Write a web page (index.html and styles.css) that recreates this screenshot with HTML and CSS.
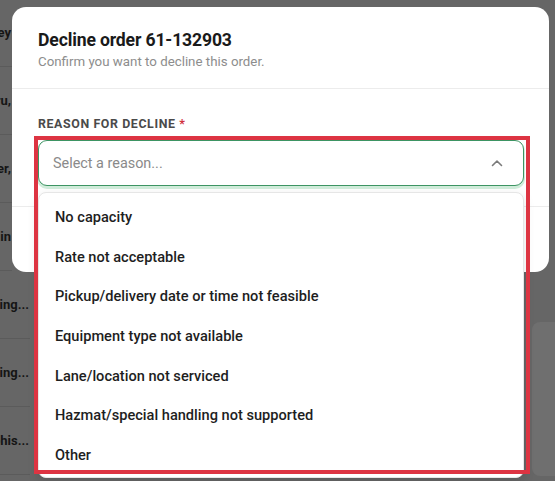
FILE: index.html
```html
<!DOCTYPE html>
<html lang="en">
<head>
<meta charset="utf-8">
<title>Decline order</title>
<link rel="stylesheet" href="styles.css">
</head>
<body>
<div class="page">
  <div class="table">
    <div class="row row-short"><span class="cell">Whitney</span></div>
    <div class="row row-short"><span class="cell">Peru,</span></div>
    <div class="row row-short"><span class="cell">Parker,</span></div>
    <div class="row row-short"><span class="cell">Main</span></div>
    <div class="row"><span class="cell">Shipping...</span></div>
    <div class="row"><span class="cell">Shipping...</span></div>
    <div class="row"><span class="cell">Memphis...</span></div>
  </div>
  <div class="side-card"></div>

  <div class="modal">
    <div class="modal-head">
      <h1 class="title">Decline order 61-132903</h1>
      <p class="subtitle">Confirm you want to decline this order.</p>
    </div>
    <div class="modal-body">
      <div class="label">REASON FOR DECLINE <span class="req">*</span></div>
      <div class="select-wrap">
        <div class="select">
          <span class="placeholder">Select a reason...</span>
          <svg class="chev" width="12" height="8" viewBox="0 0 12 8"><path d="M1.5 6.5 L6 2 L10.5 6.5" fill="none" stroke="#7a7a7a" stroke-width="1.6" stroke-linecap="round" stroke-linejoin="round"/></svg>
        </div>
        <ul class="menu">
          <li class="opt">No capacity</li>
          <li class="opt">Rate not acceptable</li>
          <li class="opt">Pickup/delivery date or time not feasible</li>
          <li class="opt">Equipment type not available</li>
          <li class="opt">Lane/location not serviced</li>
          <li class="opt">Hazmat/special handling not supported</li>
          <li class="opt">Other</li>
        </ul>
      </div>
    </div>
    <div class="modal-foot"></div>
  </div>

  <div class="highlight"></div>
</div>
</body>
</html>
```

FILE: styles.css
```css
* { box-sizing: border-box; }
html, body { margin: 0; padding: 0; }
body {
  font-family: Roboto, "Liberation Sans", Arial, sans-serif;
  background: #676767;
}
.page {
  position: relative;
  width: 555px;
  height: 481px;
  overflow: hidden;
  background: #666666;
}
.table {
  display: flex;
  flex-direction: column;
  margin-top: -1px;
}
.row {
  height: 68px;
  border-bottom: 1px solid #5b5b5b;
  display: flex;
  align-items: center;
  width: 30px;
  overflow: hidden;
  justify-content: flex-end;
}
.row-short { width: 12px; }
.cell {
  font-size: 13px;
  font-weight: 700;
  color: #151515;
  white-space: nowrap;
  padding-right: 1px;
}
.side-card {
  position: absolute;
  left: 532px;
  top: 322px;
  width: 40px;
  height: 154px;
  border-radius: 8px;
  background: #6f6f6f;
}
.modal {
  position: absolute;
  left: 12px;
  top: 7px;
  width: 537px;
  height: 265px;
  background: #ffffff;
  border-radius: 14px;
  display: flex;
  flex-direction: column;
}
.modal-head {
  padding: 23px 26px 0 26px;
  height: 82px;
  border-bottom: 1.5px solid #ececec;
}
.title {
  margin: 0;
  font-size: 17.6px;
  line-height: 20px;
  font-weight: 700;
  color: #1a1a1a;
  letter-spacing: -0.15px;
}
.subtitle {
  margin: 4px 0 0 0;
  font-size: 13.3px;
  line-height: 16px;
  color: #8d8d8d;
}
.modal-body {
  padding: 28px 25px 0 26px;
  height: 118px;
  border-bottom: 1.5px solid #ececec;
}
.label {
  font-size: 12.4px;
  line-height: 14px;
  font-weight: 700;
  color: #4a4a4a;
  letter-spacing: 0.6px;
}
.req { color: #d0303c; margin-left: 0; }
.select-wrap {
  position: relative;
  margin-top: 9px;
}
.select {
  height: 46px;
  border: 1.5px solid #3d9463;
  border-radius: 9px;
  box-shadow: 0 2px 0 1px rgba(90, 190, 125, 0.28);
  display: flex;
  align-items: center;
  justify-content: space-between;
  padding: 0 20px 0 14px;
  background: #fff;
}
.placeholder {
  font-size: 14.4px;
  color: #8a8a8a;
}
.chev { display: block; }
.menu {
  position: absolute;
  left: 0;
  right: 0;
  top: 52px;
  margin: 0;
  padding: 4px 0 2px 0;
  list-style: none;
  background: #ffffff;
  border: 1px solid #e6e6e6;
  border-radius: 8px;
  box-shadow: 0 4px 12px rgba(0, 0, 0, 0.12);
  z-index: 2;
}
.opt {
  height: 39.7px;
  display: flex;
  align-items: center;
  padding-left: 16px;
  font-size: 14.6px;
  font-weight: 500;
  color: #1e1e1e;
}
.modal-foot { flex: 1; }
.highlight {
  position: absolute;
  left: 34px;
  top: 136px;
  width: 496px;
  height: 338px;
  border: 4px solid #dd3442;
  z-index: 5;
}
```
